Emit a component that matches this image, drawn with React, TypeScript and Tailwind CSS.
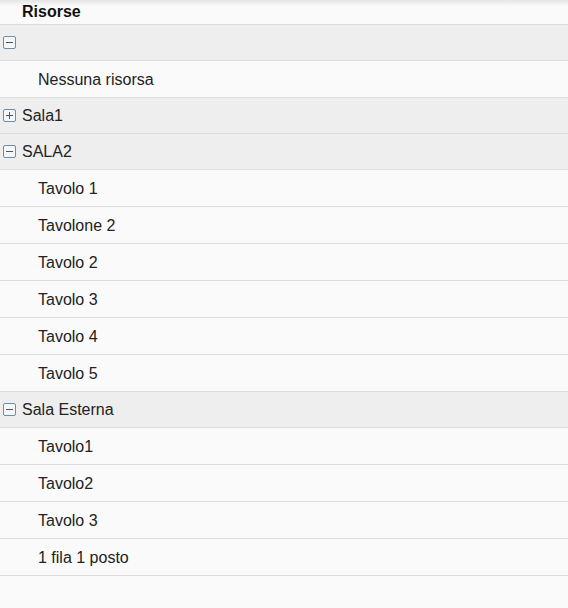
import React from 'react';

type Group = { name: string; open: boolean; items: string[] };

const GROUPS: Group[] = [
  { name: '', open: true, items: ['Nessuna risorsa'] },
  { name: 'Sala1', open: false, items: [] },
  { name: 'SALA2', open: true, items: ['Tavolo 1', 'Tavolone 2', 'Tavolo 2', 'Tavolo 3', 'Tavolo 4', 'Tavolo 5'] },
  { name: 'Sala Esterna', open: true, items: ['Tavolo1', 'Tavolo2', 'Tavolo 3', '1 fila 1 posto'] },
];

function Toggle({ open }: { open: boolean }) {
  return (
    <svg width="13" height="13" viewBox="0 0 13 13" className="shrink-0">
      <rect x="0.5" y="0.5" width="12" height="12" rx="1.5" fill="#f4f7fa" stroke="#6f8ea6" />
      <line x1="3" y1="6.5" x2="10" y2="6.5" stroke="#555" strokeWidth="1" />
      {!open && <line x1="6.5" y1="3" x2="6.5" y2="10" stroke="#555" strokeWidth="1" />}
    </svg>
  );
}

export default function App() {
  return (
    <div className="w-[568px] h-[608px] bg-[#fafafa] text-[#222] text-[16px] overflow-hidden" style={{ fontFamily: '"Liberation Sans", Arial, sans-serif' }}>
      {/* header */}
      <div className="h-[25px] border-b border-[#dcdcdc] bg-gradient-to-b from-[#e4e4e4] via-[#fafafa] via-[25%] to-[#fafafa] pl-[22px] flex items-center font-bold text-[#111]">
        Risorse
      </div>

      {GROUPS.map((g, gi) => (
        <div key={gi}>
          <div className="h-[36px] border-b border-[#dddddd] bg-[#eeeeee] flex items-center pl-[3px] gap-[6px]">
            <Toggle open={g.open} />
            <span>{g.name}</span>
          </div>
          {g.open &&
            g.items.map((it, ii) => (
              <div key={ii} className="h-[37px] border-b border-[#dddddd] flex items-center pl-[38px] pt-[2px]">
                {it}
              </div>
            ))}
        </div>
      ))}
    </div>
  );
}
